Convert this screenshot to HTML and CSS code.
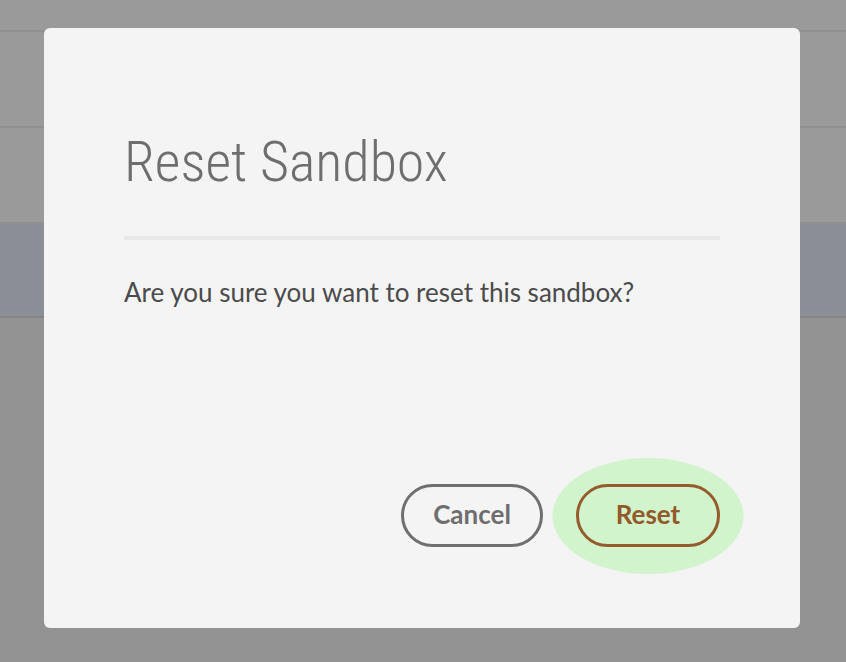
FILE: index.html
```html
<!DOCTYPE html>
<html lang="en">
<head>
<meta charset="utf-8">
<title>Reset Sandbox</title>
<link rel="stylesheet" href="styles.css">
</head>
<body>
<div class="backdrop">
  <div class="row row-first"></div>
  <div class="row"></div>
  <div class="row"></div>
  <div class="row row-selected"></div>
  <div class="rest"></div>
</div>
<div class="overlay">
  <section class="dialog" role="dialog" aria-labelledby="dlg-title">
    <h1 class="dialog-title" id="dlg-title">Reset Sandbox</h1>
    <hr class="dialog-divider">
    <p class="dialog-body">Are you sure you want to reset this sandbox?</p>
    <div class="dialog-actions">
      <button class="btn btn-secondary" type="button">Cancel</button>
      <div class="focus-glow">
        <button class="btn btn-primary" type="button">Reset</button>
      </div>
    </div>
  </section>
</div>
</body>
</html>
```
FILE: styles.css
```css
* { box-sizing: border-box; }
html, body { margin: 0; padding: 0; height: 100%; }
body {
  width: 846px;
  height: 662px;
  overflow: hidden;
  background: #939393;
  font-family: "Lato", "Open Sans", sans-serif;
  position: relative;
}
.backdrop {
  display: flex;
  flex-direction: column;
  height: 100%;
}
.row {
  height: 96px;
  flex: none;
  background: #9a9a9a;
  border-bottom: 2px solid #8f8f8f;
}
.row-first { height: 32px; }
.row-selected {
  height: 94px;
  background: #8a8e97;
  border-bottom-color: #858585;
}
.rest { flex: 1; background: #939393; }

.overlay {
  position: absolute;
  inset: 0;
  display: flex;
  justify-content: flex-start;
  align-items: flex-start;
  padding: 28px 0 0 44px;
}
.dialog {
  width: 756px;
  height: 600px;
  background: #f4f4f4;
  border-radius: 6px;
  padding: 104px 80px 81px;
  display: flex;
  flex-direction: column;
}
.dialog-title {
  margin: 0;
  font-family: "Roboto Condensed", "Lato", sans-serif;
  font-weight: 300;
  font-size: 56px;
  line-height: 60px;
  color: #6e6e6e;
}
.dialog-divider {
  margin: 44px 0 0;
  border: 0;
  height: 4px;
  background: #e8e8e8;
}
.dialog-body {
  margin: 36px 0 0;
  font-size: 26px;
  line-height: 32px;
  color: #4b4b4b;
}
.dialog-actions {
  margin-top: auto;
  display: flex;
  justify-content: flex-end;
  align-items: center;
  gap: 33px;
}
.btn {
  height: 63px;
  border-radius: 32px;
  border: 3px solid;
  background: transparent;
  font-family: "Lato", sans-serif;
  font-weight: 700;
  font-size: 26px;
  line-height: 1;
  padding: 0 29px 3px;
  cursor: pointer;
}
.btn-secondary {
  width: 142px;
  border-color: #6f6f6f;
  color: #6e6e6e;
}
.focus-glow {
  position: relative;
  display: flex;
  isolation: isolate;
}
.focus-glow::before {
  content: "";
  position: absolute;
  left: 50%;
  top: 50%;
  width: 191px;
  height: 116px;
  transform: translate(-50%, -50%);
  border-radius: 50%;
  background: #d1f4cc;
  z-index: -1;
}
.btn-primary {
  width: 144px;
  border-color: #955b2d;
  color: #93592b;
}
```
